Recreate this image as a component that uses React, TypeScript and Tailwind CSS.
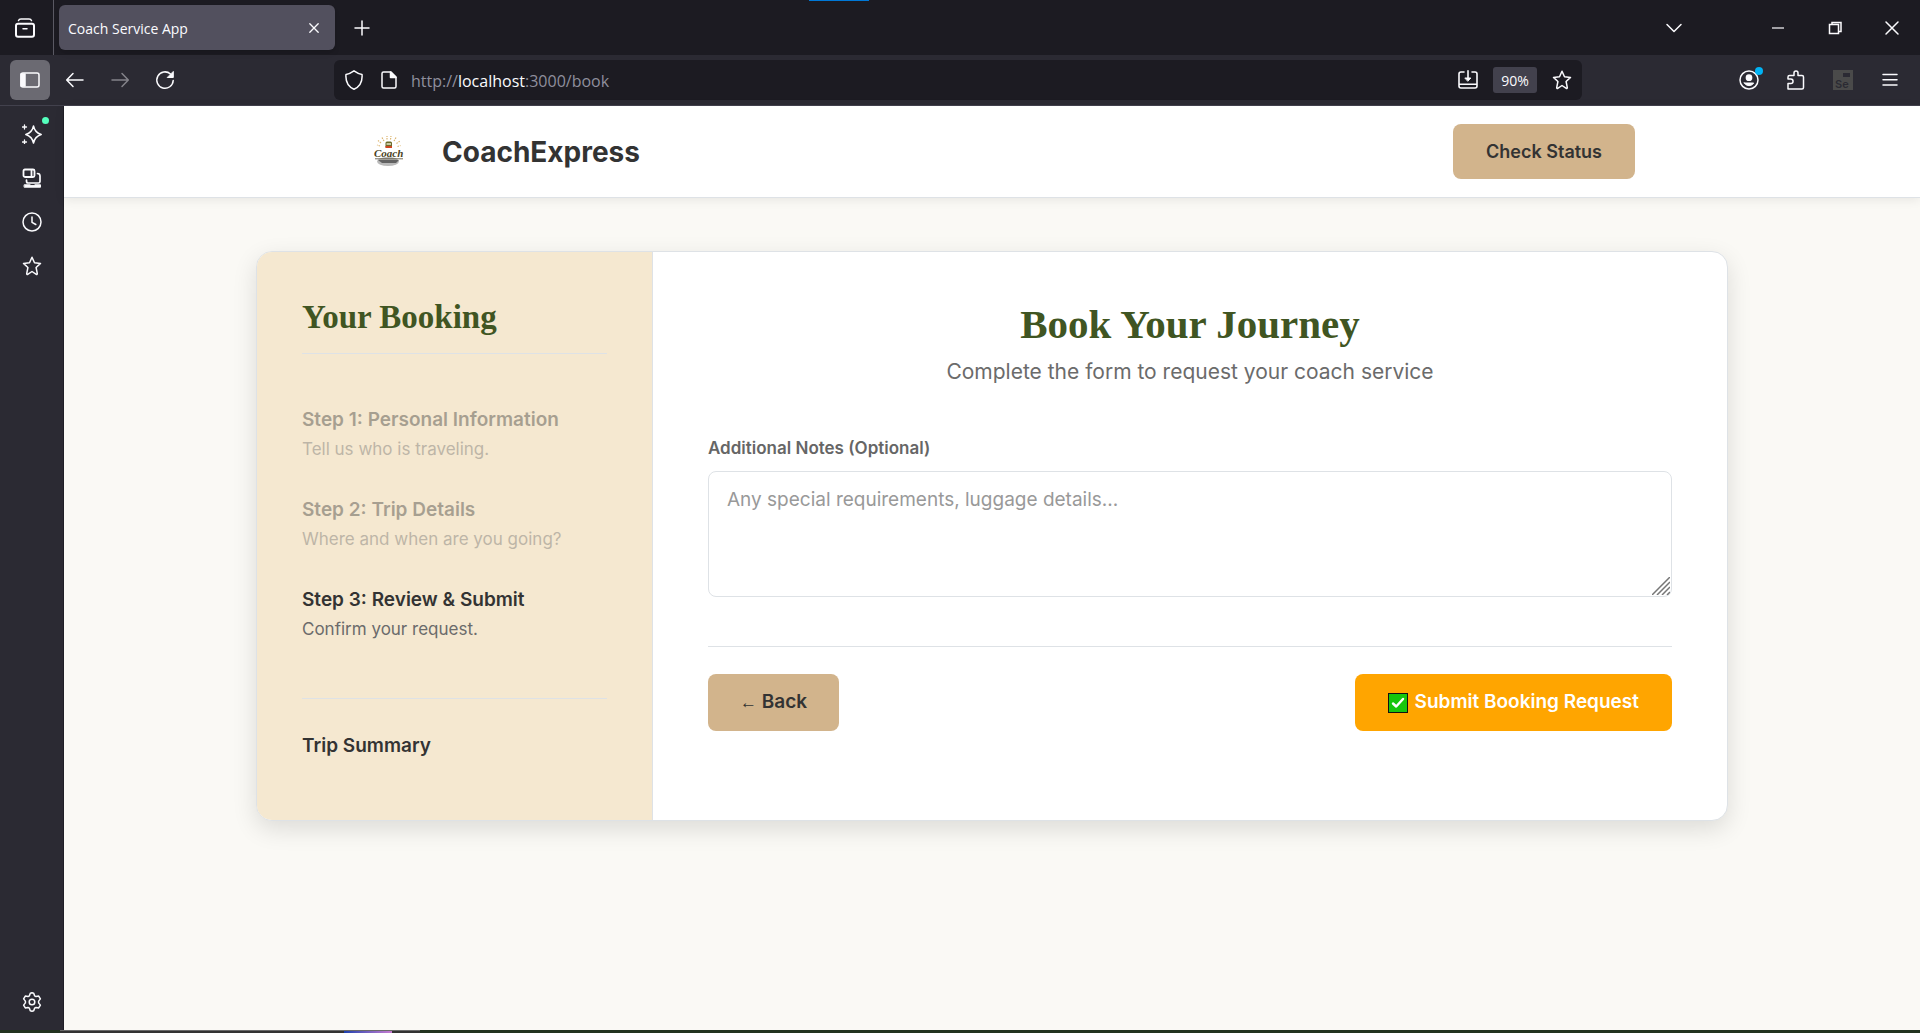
import React from "react";

type IconProps = { children: React.ReactNode; size?: number; className?: string };

function Icon({ children, size = 20, className = "" }: IconProps) {
  return (
    <svg
      width={size}
      height={size}
      viewBox="0 0 20 20"
      fill="none"
      stroke="currentColor"
      strokeWidth="1.5"
      strokeLinecap="round"
      strokeLinejoin="round"
      className={"shrink-0 " + className}
      aria-hidden="true"
    >
      {children}
    </svg>
  );
}

const starPath =
  "M10 1.2l2.5 5.5 6 .7-4.4 4.1 1.2 6.2c.1.6-.5 1-1 .7L10 15.5l-4.3 2.9c-.5.3-1.1-.1-1-.7l1.2-6.2L1.5 7.400l6-.7z";

function TabStrip() {
  return (
    <div className="relative flex h-[55px] items-center bg-[#1c1b22] text-[#fbfbfe]">
      <div className="absolute top-0 left-[809px] h-px w-[60px] bg-[#0078d7]" />
      <button aria-label="Firefox View" className="flex h-full w-[54px] items-center justify-center border-r border-[#5a5963] pr-1">
        <Icon>
          <rect x="1" y="5.7" width="18" height="13" rx="2" strokeWidth="2" />
          <path d="M3.5 2.6Q4 1 6 1h8q2 0 2.5 1.6M8 10.700h4" />
        </Icon>
      </button>
      <div className="ml-[5px] flex h-[45px] w-[276px] items-center justify-between rounded-md bg-[#52505e] pr-[15px] pl-[9px] shadow-md">
        <span className="pt-px text-[14px]">Coach Service App</span>
        <button aria-label="Close tab">
          <Icon size={12}>
            <path d="M3 3l14 14M17 3L3 17" strokeWidth="2.2" />
          </Icon>
        </button>
      </div>
      <button aria-label="New tab" className="ml-[17px]">
        <Icon>
          <path d="M10 3v14M3 10h14" />
        </Icon>
      </button>
      <div className="ml-auto flex items-center">
        <button aria-label="List all tabs" className="mr-[84px]">
          <Icon>
            <path d="M3 6.500l7 7 7-7" />
          </Icon>
        </button>
        <button aria-label="Minimize" className="mr-[37px]">
          <Icon>
            <path d="M4 10h12" strokeWidth="1.2" strokeLinecap="butt" />
          </Icon>
        </button>
        <button aria-label="Restore" className="mr-[37px]">
          <Icon>
            <path d="M4.500 6.500h9v9h-9zM7 6.500V4.500h9v9h-2" strokeLinejoin="miter" />
          </Icon>
        </button>
        <button aria-label="Close window" className="mr-[18px]">
          <Icon>
            <path d="M4 4l12 12M16 4L4 16" />
          </Icon>
        </button>
      </div>
    </div>
  );
}

function Toolbar() {
  return (
    <div className="flex h-[51px] items-center border-b border-[#42414d] bg-[#2b2a33] text-[#fbfbfe]">
      <button aria-label="Show sidebar" className="ml-[10px] flex size-10 items-center justify-center rounded-md bg-[#6b6a72]">
        <Icon>
          <rect x="1" y="3" width="18" height="14" rx="2" />
          <path d="M1 4h4v12H1z" fill="currentColor" />
        </Icon>
      </button>
      <button aria-label="Back" className="ml-[15px]">
        <Icon>
          <path d="M18 10H2M8 3.500L1.700 10 8 16.500" />
        </Icon>
      </button>
      <button aria-label="Forward" className="ml-[25px] text-[#84838a]" disabled>
        <Icon>
          <path d="M2 10h16M12 3.500l6.300 6.500-6.300 6.500" />
        </Icon>
      </button>
      <button aria-label="Reload" className="ml-[25px]">
        <Icon>
          <path d="M15.500 4A8.200 8.200 0 1 0 18.200 10.500" />
          <path d="M18.300 1.800v5.700h-5.700z" fill="currentColor" strokeWidth="1" />
        </Icon>
      </button>
      <div className="ml-[159px] flex h-10 min-w-0 flex-1 items-center rounded-md bg-[#1c1b22] px-[10px]">
        <button aria-label="Tracking protection">
          <Icon>
            <path d="M10 .8Q14.500 4 18 4.400C18.600 11 16 16.500 10 19.200 4 16.500 1.400 11 2 4.400 5.500 4 10 .8 10 .8z" />
          </Icon>
        </button>
        <button aria-label="Site information" className="ml-[15px]">
          <Icon>
            <path d="M4.500 2h7.500l5 5v9.500a1.500 1.500 0 0 1-1.500 1.500h-11A1.500 1.500 0 0 1 3 16.500v-13A1.500 1.500 0 0 1 4.500 2z" />
            <path d="M11.500 2v5.500H17z" fill="currentColor" />
          </Icon>
        </button>
        <a href="#book" className="ml-[12px] pt-0.5 font-['Open_Sans',sans-serif] text-[16px] text-[#8f8f9d]">
          http://<span className="text-[#fbfbfe]">localhost</span>:3000/book
        </a>
        <button aria-label="Install page" className="ml-auto">
          <Icon>
            <path d="M6 2H3Q1 2 1 4v12q0 2 2 2h14q2 0 2-2V4q0-2-2-2h-3M1 14.200h18M10 .8v8" strokeWidth="1.600" />
            <path d="M7.200 8h5.600L10 11z" fill="currentColor" strokeWidth="1" />
          </Icon>
        </button>
        <button className="ml-[15px] h-[26px] w-11 rounded-[3px] bg-[#42414d] text-[14px]">90%</button>
        <button aria-label="Bookmark this page" className="ml-[15px]">
          <Icon>
            <path d={starPath} />
          </Icon>
        </button>
      </div>
      <div className="ml-[157px] flex items-center gap-[27px] pr-5">
        <button aria-label="Account" className="relative">
          <Icon>
            <circle cx="10" cy="10" r="9" />
            <circle cx="10" cy="7.700" r="2.600" fill="currentColor" />
            <path d="M5.300 13h9.400q-1.500 2.700-4.700 2.700T5.300 13z" fill="currentColor" strokeWidth="1" />
          </Icon>
          <span className="absolute -top-[3px] -right-1 size-2 rounded-full bg-[#00b3f4]" />
        </button>
        <button aria-label="Extensions">
          <Icon>
            <path d="M2 19v-5.500h2.800a2 2 0 0 0 0-4.500H2V7q0-1.500 1.500-1.500H8V3a2 2 0 0 1 4 0v2.500h4q1.500 0 1.500 1.500v10.500q0 1.500-1.500 1.500z" />
          </Icon>
        </button>
        <button aria-label="Selenium IDE" className="relative flex size-5 items-end bg-[#4a4a4a] pl-0.5 font-['Inter',sans-serif] text-[11px] leading-3 font-semibold text-[#2b2a33]">
          Se
          <span className="absolute top-[3px] right-[3px] h-1 w-[7px] bg-[#2b2a33]" />
        </button>
        <button aria-label="Open application menu">
          <Icon>
            <path d="M3 4.500h14M3 9.800h14M3 15h14" />
          </Icon>
        </button>
      </div>
    </div>
  );
}

function BrowserSidebar() {
  return (
    <nav aria-label="Browser tools" className="flex w-16 shrink-0 flex-col items-center gap-6 border-r border-[#1f1e26] bg-[#2b2a33] py-[18px] text-[#fbfbfe]">
      <button aria-label="AI chatbot" className="relative">
        <Icon>
          <path d="M11.500 2c1 5 3 7 7.700 8.500-4.700 1.500-6.700 3.500-7.700 8.500-1-5-3-7-7.700-8.500C8.500 9 10.500 7 11.500 2z" />
          <path d="M2.500 1v4M.5 3h4M2.500 16v4M.5 18h4" strokeWidth="1.300" />
        </Icon>
        <span className="absolute -top-[7px] -right-[7px] size-[7px] rounded-full bg-[#54ffbd]" />
      </button>
      <button aria-label="Synced tabs">
        <Icon>
          <path d="M3 1.500h8q1.500 0 1.500 1.500v4.500Q12.500 9 11 9H3.500Q1.500 9 1.500 7.500V3Q1.500 1.500 3 1.500zM9.500 1.500V9" strokeWidth="1.800" />
          <path d="M15.500 5.500q2.500 0 2.500 2.500v5.500q0 1.500-1.500 1.500H6Q4.500 15 4.500 13v-1" strokeWidth="1.700" />
          <path d="M2.500 16.800h5.500l1 .8h3l1-.8h5.500v2.400h-16z" fill="currentColor" strokeWidth="1" />
        </Icon>
      </button>
      <button aria-label="History">
        <Icon>
          <circle cx="10" cy="10" r="9" />
          <path d="M10 5v5.300l3.800 2.200" />
        </Icon>
      </button>
      <button aria-label="Bookmarks">
        <Icon>
          <path d={starPath} />
        </Icon>
      </button>
      <button aria-label="Customize sidebar" className="mt-auto">
        <Icon>
          <path d="M10 .8l1.700.4.900 2.600 1.400.8 2.700-.5 1.700 2.800-1.800 2.200v1.800l1.800 2.200-1.700 2.800-2.700-.5-1.400.8-.9 2.600-1.700.4-1.700-.4-.9-2.600-1.400-.8-2.700.5-1.700-2.800 1.800-2.200V9.100L1.600 6.900l1.700-2.800 2.700.5 1.400-.8.9-2.600z" />
          <circle cx="10" cy="10" r="2.800" />
        </Icon>
      </button>
    </nav>
  );
}

function CoachLogo() {
  return (
    <svg width="32" height="32" viewBox="0 0 32 32" aria-label="Coach" role="img" className="overflow-visible">
      <g stroke="#dcb56f" strokeWidth="1.200" strokeDasharray="1.500 1">
        <path d="M7 10L4 9M8 7L5 4.500M11 5L9 1.500M14 3.500V0M17.500 3.500L18 0M21 5l2-3.500M23.500 7.500L27 5M24.500 10.500l3-1" />
      </g>
      <rect x="12.500" y="5.500" width="6.500" height="6.500" rx="1.500" fill="#6b6b2a" />
      <rect x="13.500" y="7" width="4.500" height="2" fill="#c8c7a0" />
      <path d="M12.500 10H19v2h-6.500z" fill="#cf4520" />
      <ellipse cx="15" cy="25.500" rx="11" ry="4.500" fill="#8a8a8a" opacity=".6" />
      <path d="M5 24h21l-3 3H9z" fill="#4c4c4c" opacity=".8" />
      <path d="M2 22.800h28" stroke="#514834" strokeWidth=".8" />
      <text x="1" y="20.500" fontFamily="Liberation Serif, serif" fontStyle="italic" fontWeight="700" fontSize="11" fill="#4a3f22">
        Coach
      </text>
    </svg>
  );
}

function SiteHeader() {
  return (
    <header className="flex items-center justify-between border-b border-[#dee2e6] bg-white py-[18px] pr-[285px] pl-[309px] shadow-[0_2px_10px_rgba(0,0,0,0.08)]">
      <a href="#home" className="flex items-center gap-[37px]">
        <CoachLogo />
        <span className="text-[28px] leading-9 font-bold text-[#333]">CoachExpress</span>
      </a>
      <a href="#status" className="rounded-lg bg-[#d2b48c] px-[33px] py-[15px] text-[18px] leading-[25px] font-semibold text-[#333]">
        Check Status
      </a>
    </header>
  );
}

const steps = [
  { title: "Step 1: Personal Information", text: "Tell us who is traveling.", active: false },
  { title: "Step 2: Trip Details", text: "Where and when are you going?", active: false },
  { title: "Step 3: Review & Submit", text: "Confirm your request.", active: true },
];

function BookingSummary() {
  return (
    <aside className="w-[396px] shrink-0 border-r border-[#dee2e6] bg-[#f5e8d0] px-[45px] pt-[43px] pb-[60px]">
      <h2 className="border-b border-[#dee2e6] pb-[14px] font-['Liberation_Serif',serif] text-[33px] leading-[44px] font-bold text-[#405522]">
        Your Booking
      </h2>
      <ol className="mt-[51px] flex flex-col gap-[31px]">
        {steps.map((step) => (
          <li key={step.title} className={step.active ? "" : "opacity-40"}>
            <h3 className="text-[19px] leading-[30px] font-semibold text-[#333]">{step.title}</h3>
            <p className="text-[17px] leading-[29px] text-[#6b6b6b]">{step.text}</p>
          </li>
        ))}
      </ol>
      <h3 className="mt-[54px] border-t border-[#dee2e6] pt-8 text-[19px] leading-[29px] font-semibold text-[#333]">
        Trip Summary
      </h3>
    </aside>
  );
}

function CheckMark() {
  return (
    <svg width="20" height="20" viewBox="0 0 20 20" aria-hidden="true">
      <rect x=".5" y=".5" width="19" height="19" fill="#16c60c" stroke="#111" />
      <path d="M5 10.500l3.200 3L15 6" fill="none" stroke="#fff" strokeWidth="2.400" strokeLinecap="round" strokeLinejoin="round" />
    </svg>
  );
}

function BookingForm() {
  return (
    <form className="min-w-0 flex-1 px-[55px] pt-[46px]" onSubmit={(e) => e.preventDefault()}>
      <h1 className="text-center font-['Liberation_Serif',serif] text-[41px] leading-[52px] font-bold text-[#405522]">
        Book Your Journey
      </h1>
      <p className="mt-[5px] text-center text-[21px] leading-[34px] text-[#6b6b6b]">
        Complete the form to request your coach service
      </p>
      <label htmlFor="notes" className="mt-[45px] block text-[17px] leading-[28px] font-semibold text-[#666]">
        Additional Notes (Optional)
      </label>
      <div className="relative mt-[9px]">
        <textarea
          id="notes"
          placeholder="Any special requirements, luggage details..."
          className="block h-[126px] w-full resize-none rounded-lg border border-[#dee2e6] px-[18px] py-[14px] text-[19px] leading-7 text-[#333] placeholder:text-[#999]"
        />
        <svg width="18" height="18" viewBox="0 0 18 18" stroke="#777" strokeWidth="1.500" className="absolute right-0.5 bottom-0.5" aria-hidden="true">
          <path d="M0 18L18 0M5 18L18 5M10 18l8-8M15 18l3-3" />
        </svg>
      </div>
      <div className="mt-[49px] flex items-center justify-between border-t border-[#dee2e6] pt-[27px]">
        <button type="button" className="h-[57px] rounded-lg bg-[#d2b48c] px-8 text-[19px] font-semibold text-[#333]">
          <span className="font-['Liberation_Sans',sans-serif] text-[17px] font-normal">←</span> Back
        </button>
        <button type="submit" className="flex h-[57px] items-center gap-[7px] rounded-lg bg-[#ffa500] px-[33px] text-[19px] font-semibold text-white">
          <CheckMark />
          Submit Booking Request
        </button>
      </div>
    </form>
  );
}

export default function App() {
  return (
    <div className="flex h-screen flex-col overflow-hidden font-['Open_Sans',sans-serif]">
      <TabStrip />
      <Toolbar />
      <div className="flex min-h-0 flex-1">
        <BrowserSidebar />
        <div className="min-w-0 flex-1 bg-[#faf9f5] font-['Inter',sans-serif]">
          <SiteHeader />
          <main className="mx-auto mt-[53px] flex max-w-[1472px] overflow-hidden rounded-2xl border border-[#dee2e6] bg-white shadow-[0_8px_24px_rgba(0,0,0,0.12)]">
            <BookingSummary />
            <BookingForm />
          </main>
        </div>
      </div>
      <div className="flex h-[3px] bg-[#22331f]">
        <div className="ml-[60px] flex w-[360px] border-t border-[#6a6a6a] bg-[#333]">
          <div className="ml-[284px] w-12 bg-linear-to-r from-[#1a3fae] to-[#c77ad0]" />
        </div>
      </div>
    </div>
  );
}
